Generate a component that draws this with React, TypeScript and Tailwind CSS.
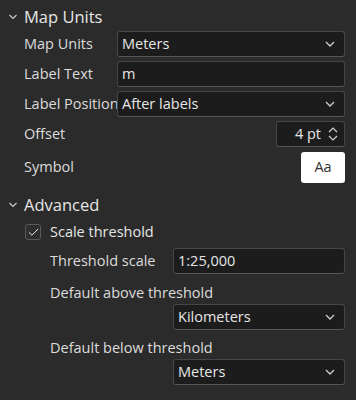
import { Check } from "lucide-react"

const font = { fontFamily: '"Open Sans", "Noto Sans", sans-serif' }

function Chevron({ className = "" }: { className?: string }) {
  return (
    <svg width="10" height="6" viewBox="0 0 10 6" className={className}>
      <path d="M1 1l4 4 4-4" fill="none" stroke="currentColor" strokeWidth="1.3" />
    </svg>
  )
}

function Select({ value, className = "" }: { value: string; className?: string }) {
  return (
    <div className={`h-[26px] flex items-center justify-between bg-[#1c1c1c] border border-[#464646] border-b-[#555] rounded-[3px] pl-[4px] pr-[9px] ${className}`}>
      <span className="text-[14.5px] text-[#e6e6e6]">{value}</span>
      <Chevron className="text-[#d0d0d0]" />
    </div>
  )
}

function TextInput({ value, className = "" }: { value: string; className?: string }) {
  return (
    <div className={`h-[26px] flex items-center bg-[#1c1c1c] border border-[#464646] border-b-[#555] rounded-[3px] pl-[4px] ${className}`}>
      <span className="text-[14.5px] text-[#e6e6e6]">{value}</span>
    </div>
  )
}

function Row({ label, children }: { label: string; children: React.ReactNode }) {
  return (
    <div className="flex items-center h-[26px]">
      <span className="w-[93px] shrink-0 text-[14.5px] text-[#dcdcdc] whitespace-nowrap">{label}</span>
      <div className="flex-1">{children}</div>
    </div>
  )
}

function Header({ title }: { title: string }) {
  return (
    <div className="flex items-center h-[28px]">
      <svg width="16" height="8" viewBox="0 0 16 8" className="text-[#cfcfcf]">
        <path d="M1.5 2l3.5 3.5 3.5-3.5" fill="none" stroke="currentColor" strokeWidth="1.1" />
      </svg>
      <span className="text-[16.5px] text-[#e6e6e6]">{title}</span>
    </div>
  )
}

export default function App() {
  return (
    <div className="w-[356px] h-[400px] bg-[#2b2b2b] pl-[8px] pr-[11px] pt-[3px] overflow-hidden" style={font}>
      <Header title="Map Units" />

      <div className="flex flex-col gap-[4px] pl-[16px]">
        <Row label="Map Units">
          <Select value="Meters" />
        </Row>
        <Row label="Label Text">
          <TextInput value="m" />
        </Row>
        <Row label="Label Position">
          <Select value="After labels" />
        </Row>
        <Row label="Offset">
          <div className="flex justify-end">
            <div className="w-[69px] h-[26px] flex items-center justify-end gap-[7px] bg-[#1c1c1c] border border-[#464646] border-b-[#555] rounded-[3px] pr-[6px]">
              <span className="text-[14.5px] text-[#e6e6e6]">4 pt</span>
              <svg width="10" height="18" viewBox="0 0 10 18" className="text-[#d0d0d0]">
                <path d="M1 7l4-4 4 4M1 11l4 4 4-4" fill="none" stroke="currentColor" strokeWidth="1.2" />
              </svg>
            </div>
          </div>
        </Row>
        <div className="flex items-center h-[32px]">
          <span className="w-[93px] shrink-0 text-[14.5px] text-[#dcdcdc]">Symbol</span>
          <div className="flex-1 flex justify-end">
            <div className="w-[44px] h-[31px] bg-white rounded-[3px] flex items-center justify-center text-[14.5px] text-[#333]">
              Aa
            </div>
          </div>
        </div>
      </div>

      <div className="mt-[8px]">
        <Header title="Advanced" />
      </div>

      <div className="pl-[17px] mt-[5px]">
        <div className="flex items-center gap-[9px] h-[16px]">
          <div className="w-[16px] h-[16px] rounded-[3px] border border-[#5a5a5a] bg-[#2e2e2e] flex items-center justify-center">
            <Check size={13} strokeWidth={1.8} className="text-[#f0f0f0]" />
          </div>
          <span className="text-[14.5px] text-[#e6e6e6]">Scale threshold</span>
        </div>

        <div className="pl-[25px] mt-[8px]">
          <div className="flex items-center h-[26px]">
            <span className="w-[123px] shrink-0 text-[14.5px] text-[#dcdcdc]">Threshold scale</span>
            <TextInput value="1:25,000" className="flex-1" />
          </div>

          <div className="mt-[8px] h-[22px] flex items-center text-[14.5px] text-[#dcdcdc]">Default above threshold</div>
          <div className="pl-[123px]">
            <Select value="Kilometers" />
          </div>

          <div className="mt-[7px] h-[22px] flex items-center text-[14.5px] text-[#dcdcdc]">Default below threshold</div>
          <div className="pl-[123px]">
            <Select value="Meters" />
          </div>
        </div>
      </div>
    </div>
  )
}
